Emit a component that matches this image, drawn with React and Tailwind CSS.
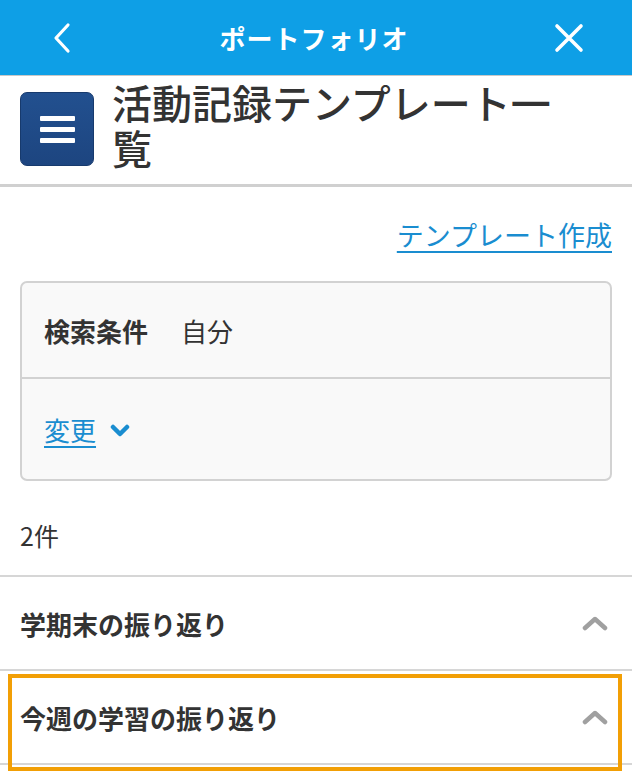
import React from "react";

const jp = { fontFamily: '"Noto Sans CJK JP", "Noto Sans", sans-serif' };

function ChevronUp() {
  return (
    <svg width="26" height="16" viewBox="0 0 26 16" fill="none">
      <path d="M3 13 L13 4 L23 13" stroke="#a0a0a0" strokeWidth="4.5" strokeLinecap="round" strokeLinejoin="round" />
    </svg>
  );
}

function Item({ title, highlight }) {
  return (
    <div className="relative h-[94px] flex items-center justify-between pl-5 pr-[24px] border-b-2 border-[#d6d6d6]">
      <span className="text-[26px] font-bold text-[#333]">{title}</span>
      <ChevronUp />
      {highlight && (
        <div className="absolute left-2 right-[10px] top-[3px] bottom-[-8px] border-4 border-[#f29f05] pointer-events-none" />
      )}
    </div>
  );
}

export default function App() {
  return (
    <div className="w-[632px] h-[774px] overflow-hidden bg-white" style={jp}>
      {/* header */}
      <div className="h-[76px] bg-[#0e9fe6] flex items-center justify-between px-[50px] border-b border-[#c8c8c8]">
        <svg width="24" height="32" viewBox="0 0 24 32" fill="none">
          <path d="M18 3 L6 16 L18 29" stroke="white" strokeWidth="3.2" strokeLinecap="round" strokeLinejoin="round" />
        </svg>
        <span className="text-white text-[26px] font-bold tracking-[1px]">ポートフォリオ</span>
        <svg width="30" height="30" viewBox="0 0 30 30" fill="none" className="mr-[-2px]">
          <path d="M3 3 L27 27 M27 3 L3 27" stroke="white" strokeWidth="3.6" strokeLinecap="round" />
        </svg>
      </div>

      {/* title */}
      <div className="flex items-start gap-[18px] px-5 pt-[4px] pb-[14px] border-b-[3px] border-[#d0d0d0]">
        <div className="mt-[12px] w-[74px] h-[74px] shrink-0 rounded-[7px] bg-gradient-to-b from-[#22508f] to-[#1d4580] border border-[#173a6d] flex flex-col items-center justify-center gap-[6px]">
          <div className="w-[35px] h-[5px] bg-white rounded-[1px]" />
          <div className="w-[35px] h-[5px] bg-white rounded-[1px]" />
          <div className="w-[35px] h-[5px] bg-white rounded-[1px]" />
        </div>
        <h1 className="text-[40px] leading-[45px] font-medium text-[#333] pr-[56px]">
          活動記録テンプレート一覧
        </h1>
      </div>

      <div className="px-5">
        <div className="flex justify-end pt-[28px]">
          <a className="text-[27px] leading-[39px] text-[#1a8dd0] underline underline-offset-[5px] decoration-[2px]">
            テンプレート作成
          </a>
        </div>

        {/* search */}
        <div className="mt-[27px] border-2 border-[#d2d2d2] rounded-[7px] bg-[#f9f9f9]">
          <div className="h-[96px] flex items-center px-[22px] border-b-2 border-[#d2d2d2]">
            <span className="text-[26px] font-bold text-[#333]">検索条件</span>
            <span className="text-[26px] text-[#333] ml-[33px]">自分</span>
          </div>
          <div className="h-[100px] flex items-center px-[22px] gap-[14px]">
            <a className="text-[26px] text-[#1a8dd0] underline underline-offset-[5px] decoration-[2px]">変更</a>
            <svg width="20" height="14" viewBox="0 0 20 14" fill="none" className="mt-[4px]">
              <path d="M3 3 L10 10 L17 3" stroke="#1a8dd0" strokeWidth="4.5" strokeLinecap="round" strokeLinejoin="round" />
            </svg>
          </div>
        </div>

        <div className="h-[94px] pt-[16px] flex items-center text-[25px] text-[#333]">2件</div>
      </div>

      {/* list */}
      <div className="border-t-2 border-[#d6d6d6]">
        <Item title="学期末の振り返り" />
        <Item title="今週の学習の振り返り" highlight />
      </div>
    </div>
  );
}
